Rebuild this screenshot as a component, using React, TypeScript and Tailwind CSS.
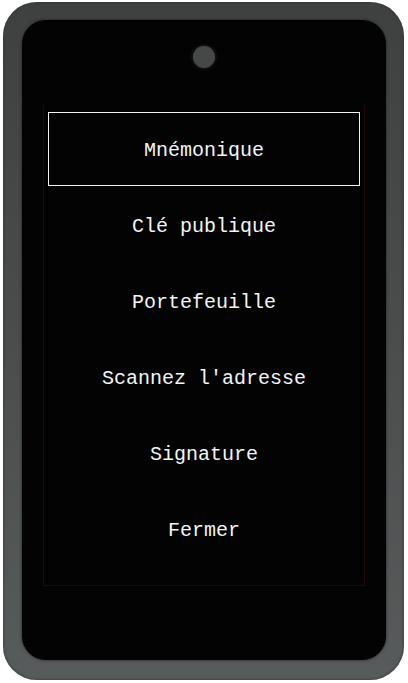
const items = ['Mnémonique', 'Clé publique', 'Portefeuille', "Scannez l'adresse", 'Signature', 'Fermer'];

export default function App() {
  return (
    <div className="w-[408px] h-[683px] bg-white pt-[2px] pl-[3px]">
      {/* device frame */}
      <div className="w-[401px] h-[678px] rounded-[34px] bg-gradient-to-b from-[#3f4141] via-[#4b4d4d] to-[#585b5b] pt-[18px] pl-[19px] pr-[18px] pb-[20px] shadow-[inset_0_0_3px_#2e3030]">
        <div className="h-full rounded-[24px] bg-[#030303] flex flex-col items-center shadow-[0_0_3px_#1e1f1f]">
          {/* camera */}
          <div className="mt-[26px] w-[22px] h-[22px] rounded-full bg-[#464747] shadow-[0_0_4px_#2a2a2a]" />
          {/* screen */}
          <div className="mt-[37px] w-[322px] self-start ml-[21px] border-x border-b border-[#1f0808] px-[4px] pt-[6px] pb-[18px] flex flex-col">
            {items.map((label, i) => (
              <div key={label} className="h-[76px] py-px flex">
                <div
                  className={
                    'flex-1 flex items-center justify-center pt-[4px] text-[#f4f4f4] text-[20px] ' +
                    (i === 0 ? 'border border-[#f2f2f2]' : 'border border-transparent')
                  }
                  style={{ fontFamily: '"Liberation Mono", "DejaVu Sans Mono", monospace' }}
                >
                  {label}
                </div>
              </div>
            ))}
          </div>
        </div>
      </div>
    </div>
  );
}
